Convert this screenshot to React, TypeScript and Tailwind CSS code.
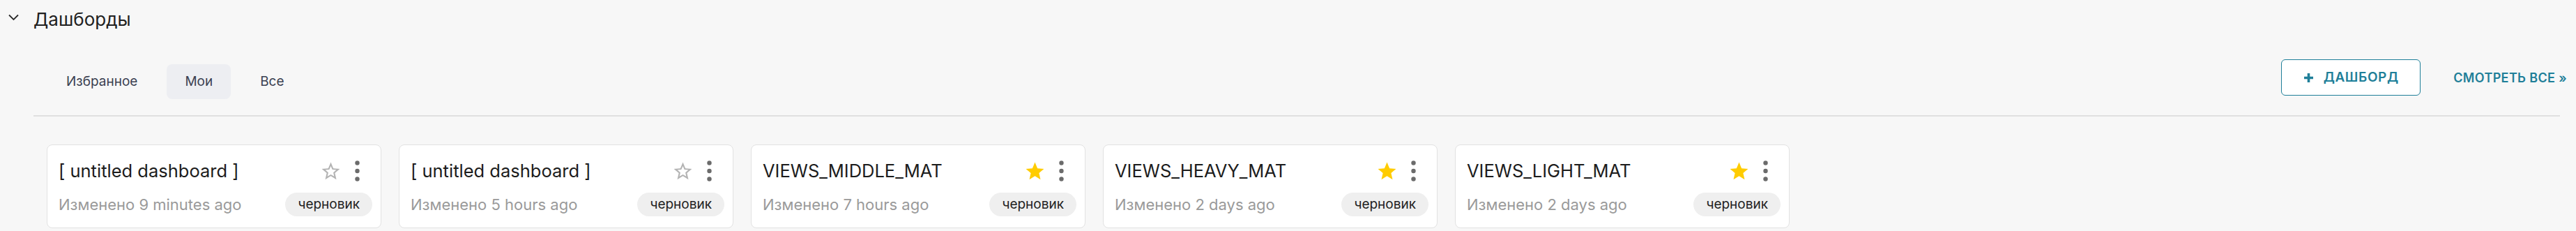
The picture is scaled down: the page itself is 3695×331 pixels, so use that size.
import type { ReactNode } from 'react'

type Dash = { title: string; changed: string; fav: boolean }

const DASHBOARDS: Dash[] = [
  { title: '[ untitled dashboard ]', changed: '9 minutes ago', fav: false },
  { title: '[ untitled dashboard ]', changed: '5 hours ago', fav: false },
  { title: 'VIEWS_MIDDLE_MAT', changed: '7 hours ago', fav: true },
  { title: 'VIEWS_HEAVY_MAT', changed: '2 days ago', fav: true },
  { title: 'VIEWS_LIGHT_MAT', changed: '2 days ago', fav: true },
]

const TABS = ['Избранное', 'Мои', 'Все']

function Star({ filled }: { filled: boolean }) {
  return (
    <svg width="31" height="31" viewBox="0 0 24 24" className="shrink-0">
      {filled ? (
        <path fill="#ffcc00" d="M12 17.27 18.18 21l-1.64-7.03L22 9.24l-7.19-.61L12 2 9.19 8.63 2 9.24l5.46 4.73L5.82 21z" />
      ) : (
        <path
          fill="#b3b3b3"
          d="M22 9.24l-7.19-.62L12 2 9.19 8.63 2 9.24l5.46 4.73L5.82 21 12 17.27 18.18 21l-1.63-7.03L22 9.24zM12 15.4l-3.76 2.27 1-4.28-3.32-2.88 4.38-.38L12 6.1l1.71 4.04 4.38.38-3.32 2.88 1 4.28L12 15.4z"
        />
      )}
    </svg>
  )
}

function MoreVert() {
  return (
    <svg width="7" height="30" viewBox="0 0 7 30" className="shrink-0">
      <circle cx="3.5" cy="3.5" r="3.2" fill="#6b6b6b" />
      <circle cx="3.5" cy="15" r="3.2" fill="#6b6b6b" />
      <circle cx="3.5" cy="26.5" r="3.2" fill="#6b6b6b" />
    </svg>
  )
}

function Card({ d }: { d: Dash }) {
  return (
    <div className="flex h-[120px] w-[480px] shrink-0 flex-col rounded-lg border border-[#e2e2e2] bg-white pt-[21px]">
      <div className="flex h-[32px] items-center pl-4 pr-[30px]">
        <span className="flex-1 truncate text-[25.5px] leading-[32px] text-[#1c1c1c]">{d.title}</span>
        <Star filled={d.fav} />
        <span className="ml-[19px]">
          <MoreVert />
        </span>
      </div>
      <div className="mt-[15px] flex h-[34px] items-center pl-4 pr-3">
        <span className="flex-1 text-[22px] leading-[26px] text-[#9a9a9a]">Изменено {d.changed}</span>
        <span className="flex h-[34px] items-center rounded-full bg-[#efefef] px-[18px] text-[19px] text-[#222]">
          черновик
        </span>
      </div>
    </div>
  )
}

function Tab({ active, children }: { active?: boolean; children: ReactNode }) {
  return (
    <button
      className={`flex h-[50px] items-center rounded-lg px-[26px] text-[19px] text-[#3b4151] ${
        active ? 'bg-[#edeef2]' : ''
      }`}
    >
      {children}
    </button>
  )
}

export default function App() {
  return (
    <div className="min-h-screen w-full bg-[#f7f7f7] font-['Inter','Noto_Sans',sans-serif]">
      <header className="flex items-start pl-3 pt-3">
        <svg width="15" height="10" viewBox="0 0 15 10" className="mt-[8px]">
          <polyline points="1,1.5 7.5,8 14,1.5" fill="none" stroke="#2b2b2b" strokeWidth="1.8" />
        </svg>
        <h2 className="ml-[21px] text-[26px] leading-[32px] text-[#212121]">Дашборды</h2>
      </header>

      <div className="mt-[41px] flex items-start pl-[69px] pr-[13px]">
        <div className="mt-[7px] flex gap-4">
          {TABS.map((t) => (
            <Tab key={t} active={t === 'Мои'}>
              {t}
            </Tab>
          ))}
        </div>
        <div className="ml-auto flex items-center">
          <button className="flex h-[52px] w-[200px] items-center justify-center gap-[14px] rounded-md border border-[#1f7f99] bg-white text-[19px] font-semibold tracking-[0.03em] text-[#1f7f99]">
            <svg width="15" height="15" viewBox="0 0 15 15">
              <path d="M7.5 1v13M1 7.5h13" stroke="#1f7f99" strokeWidth="3.6" />
            </svg>
            ДАШБОРД
          </button>
          <a className="ml-[47px] text-[18px] font-semibold tracking-[0.02em] text-[#1f7f99]">СМОТРЕТЬ ВСЕ »</a>
        </div>
      </div>

      <div className="ml-[48px] mr-[23px] mt-[23px] h-[2px] bg-[#e0e0e0]" />

      <div className="mt-[40px] flex gap-[25px] pl-[67px]">
        {DASHBOARDS.map((d, i) => (
          <Card key={i} d={d} />
        ))}
      </div>
    </div>
  )
}
